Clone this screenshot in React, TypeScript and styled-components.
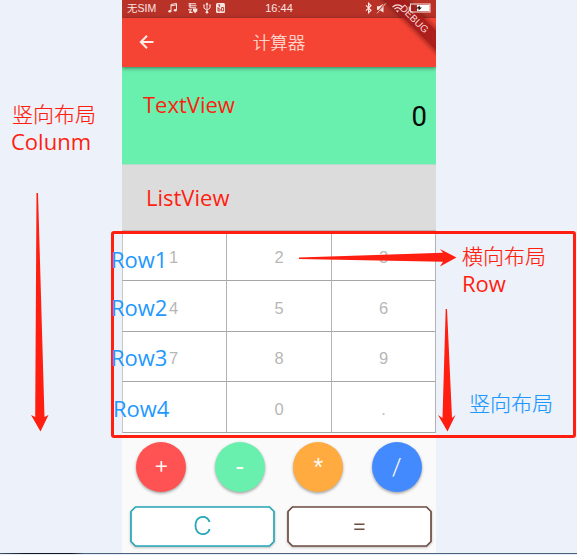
import React from 'react';
import styled, { createGlobalStyle } from 'styled-components';

const GlobalStyle = createGlobalStyle`
  * { box-sizing: border-box; }
  body { margin: 0; background: #edf2fa; overflow: hidden; }
`;

const RED = '#ff1e0f';
const BLUE = '#1e98ff';

const Page = styled.main`
  position: relative;
  width: 577px;
  height: 555px;
  overflow: hidden;
  padding-left: 122px;
  background: #edf2fa;
  font-family: Roboto, 'Noto Sans CJK SC', sans-serif;
`;

const Phone = styled.section`
  position: relative;
  width: 314px;
  height: 553px;
  display: flex;
  flex-direction: column;
  overflow: hidden;
  background: #fafafa;
`;

const StatusBar = styled.div`
  height: 18px;
  flex: none;
  display: grid;
  grid-template-columns: 1fr auto 1fr;
  align-items: center;
  padding: 0 5px 2px;
  background: #b83228;
  color: #f8e4e1;
  font: 11px/16px 'Liberation Sans', 'Noto Sans CJK SC', sans-serif;
`;

const StatusGroup = styled.div<{ $end?: boolean }>`
  position: relative;
  z-index: 3;
  display: flex;
  align-items: center;
  justify-content: ${p => (p.$end ? 'flex-end' : 'flex-start')};
  height: 16px;
  white-space: nowrap;
  svg { display: block; flex: none; }
`;

const Carrier = styled.span`
  width: 40px;
  font-size: 10.5px;
`;

const AppBar = styled.header`
  z-index: 1;
  height: 49px;
  flex: none;
  display: grid;
  grid-template-columns: 49px 1fr 49px;
  align-items: center;
  padding-bottom: 2px;
  background: #f64434;
  box-shadow: 0 1px 4px rgba(0, 0, 0, 0.5);
  color: #fde0dc;
`;

const BackIcon = styled.svg`
  display: block;
  margin-left: 17px;
`;

const Title = styled.h1`
  margin: 0;
  text-align: center;
  font: 300 17.5px/24px 'Noto Sans CJK SC', sans-serif;
  -webkit-text-stroke: 0.2px currentColor;
`;

const Display = styled.div`
  height: 97px;
  flex: none;
  display: flex;
  align-items: center;
  justify-content: flex-end;
  padding: 2px 9px 0 0;
  background: #69f0ae;
  color: #050a07;
  font-size: 27.5px;
  line-height: 32px;
`;

const History = styled.div`
  height: 66px;
  flex: none;
  background: #dcdcdc;
  border-top: 1px solid #b5dcc8;
`;

const Keypad = styled.div`
  height: 203px;
  flex: none;
  display: grid;
  grid-template-rows: 50px 51px 50px 51px;
  background: #fff;
  border-top: 1px solid #b8b8b8;
`;

const KeyRow = styled.div`
  display: grid;
  grid-template-columns: 105px 105px 104px;
`;

const Key = styled.div`
  display: flex;
  align-items: center;
  justify-content: center;
  padding-top: 3px;
  border-right: 1px solid #b3b3b3;
  border-bottom: 1px solid #a6a6a6;
  &:first-child {
    border-left: 1px solid #c8c8c8;
    padding-right: 2px;
  }
  color: #b7b7b7;
  font: 16.5px/20px 'Liberation Sans', sans-serif;
`;

const Operators = styled.div`
  height: 68px;
  flex: none;
  display: grid;
  grid-template-columns: repeat(4, 1fr);
  align-items: center;
  justify-items: center;
`;

const Operator = styled.div<{ $color: string }>`
  width: 50px;
  height: 50px;
  border-radius: 50%;
  display: grid;
  place-items: center;
  background: ${p => p.$color};
  box-shadow: 0 1.5px 3px rgba(0, 0, 0, 0.35);
  color: #fffaf5;
`;

const Symbol = styled.span<{ $size: number; $shift: number; $face?: string; $weight?: number }>`
  display: block;
  padding-top: ${p => Math.max(p.$shift, 0) * 2}px;
  padding-bottom: ${p => Math.max(-p.$shift, 0) * 2}px;
  font: ${p => p.$weight ?? 300} ${p => p.$size}px/30px ${p => p.$face ?? 'Roboto'}, sans-serif;
`;

const Actions = styled.div`
  display: flex;
  gap: 12px;
  padding: 5px 4px 0 8px;
`;

const Action = styled.div<{ $color: string }>`
  position: relative;
  width: 145px;
  height: 41px;
  display: grid;
  place-items: center;
  color: ${p => p.$color};
  filter: drop-shadow(0 1px 1px rgba(0, 0, 0, 0.25));
`;

const Outline = styled.svg`
  position: absolute;
  inset: 0;
`;

const Caption = styled.span<{ $size: number; $lift: number }>`
  position: relative;
  padding-bottom: ${p => p.$lift}px;
  font: 300 ${p => p.$size}px/36px Inter, sans-serif;
`;

const Banner = styled.div`
  position: absolute;
  z-index: 2;
  top: 12px;
  right: -39px;
  width: 120px;
  height: 15px;
  transform: rotate(45deg);
  background: rgba(160, 25, 25, 0.85);
  box-shadow: 0 0 5px rgba(0, 0, 0, 0.6);
`;

const BannerText = styled.div`
  position: absolute;
  z-index: 4;
  top: 12px;
  right: -39px;
  width: 120px;
  transform: rotate(45deg);
  color: #f7d8d8;
  text-align: center;
  font: 10px/15px 'Liberation Sans', sans-serif;
  text-indent: -2px;
`;

const Note = styled.div<{ $x: number; $y: number; $blue?: boolean; $cjk?: boolean }>`
  position: absolute;
  z-index: 3;
  left: ${p => p.$x}px;
  top: ${p => p.$y}px;
  color: ${p => (p.$blue ? BLUE : RED)};
  font: ${p => (p.$cjk ? "300 21px/24px 'Noto Sans CJK SC'" : "22px/24px 'Open Sans'")}, sans-serif;
  -webkit-text-stroke: ${p => (p.$cjk ? '0.2px currentColor' : '0')};
  white-space: nowrap;
`;

const Frame = styled.div`
  position: absolute;
  z-index: 3;
  left: 111px;
  top: 231px;
  width: 465px;
  height: 207px;
  border: 3px solid ${RED};
  border-radius: 3px;
`;

const Arrows = styled.svg`
  position: absolute;
  z-index: 3;
  inset: 0;
`;

const Baseline = styled.div`
  position: absolute;
  left: 0;
  top: 553px;
  width: 577px;
  height: 2px;
  border-top: 1px solid #4c617b;
  background: #e4eef8;
`;

const BaselineShade = styled.div`
  position: absolute;
  left: 0;
  top: 553px;
  width: 84px;
  height: 1px;
  background: linear-gradient(90deg, #44536a, #10151c 30%, #10151c 85%, #4c617b);
`;

const LeftIcons = () => (
  <svg width="60" height="12" viewBox="0 0 60 12" fill="none" stroke="#f8e4e1">
    <path d="M4 9V2.5L9.5 1.5V8M4 3.8L9.5 2.8" />
    <ellipse cx="2.8" cy="9.2" rx="1.5" ry="1.2" fill="#f8e4e1" stroke="none" />
    <ellipse cx="8.2" cy="8.2" rx="1.5" ry="1.2" fill="#f8e4e1" stroke="none" />
    <path d="M21.5 1.7H29M21.5 3.7H29.5M22.5 5.7H29M21 7.8H25M22 10.4H25.5M23 1V6M23.2 7.5V10.5" strokeWidth="1.1" />
    <path d="M26 6.5H30.3V9L28.2 11.2L26 9Z" fill="#f8e4e1" stroke="none" />
    <path d="M40 1.5V10M37 4V6.2L40 8.2L43 6V4" />
    <path d="M38.5 2.8L40 .3L41.5 2.8Z" fill="#f8e4e1" stroke="none" />
    <circle cx="40" cy="10.2" r="1.3" fill="#f8e4e1" stroke="none" />
    <path d="M36 3.2H38M42 3.2H44" />
    <rect x="49" y="1" width="9" height="10" rx="1.5" fill="#f8e4e1" stroke="none" />
    <path d="M51 3.2L52.6 2.6V5M51 5V9H53V7L51 6.5M54.6 5.5H56.6V9H54.6Z" stroke="#b83228" strokeWidth=".9" />
  </svg>
);

const RightIcons = () => (
  <svg width="67" height="12" viewBox="0 0 67 12" fill="none" stroke="#f8e4e1">
    <path d="M2 3.3L7 8.3L4.6 10.7V1.3L7 3.7L2 8.7" strokeWidth="1.2" />
    <path d="M13 4.3H15.3L19.5 1.8V10.5L15.3 8H13Z" fill="#f8e4e1" stroke="none" />
    <path d="M13 11L21.5 1" stroke="#b83228" strokeWidth="1.7" />
    <path d="M13 11.4L21.8 1.4" strokeWidth=".8" />
    <path d="M28.5 5Q33.5 .6 38.5 5M30.5 7Q33.5 4.2 36.5 7" strokeWidth="1.2" />
    <path d="M31.8 8.5H35.2L33.5 10.5Z" fill="#f8e4e1" stroke="none" />
    <rect x="46.5" y="2" width="19.5" height="8" />
    <rect x="53" y="3" width="12.5" height="6" fill="#fff" stroke="none" />
    <path d="M45.3 4.5V8" strokeWidth="1.2" />
    <path d="M55.8 3.4V5.4H58L54.6 8.6V6.5H52.2Z" fill="#210c0a" stroke="none" />
  </svg>
);

const rows = [['1', '2', '3'], ['4', '5', '6'], ['7', '8', '9'], ['', '0', '.']];

const operators = [
  { label: '+', color: '#ff5252', size: 24, shift: -2, face: 'Inter' },
  { label: '-', color: '#69f0ae', size: 27, shift: 0, weight: 400 },
  { label: '*', color: '#ffab40', size: 25, shift: 0, face: "'Liberation Sans'", weight: 400 },
  { label: '/', color: '#448aff', size: 24, shift: 0 },
];

const actions = [
  { label: 'C', color: '#24a7b6', size: 26, lift: 1 },
  { label: '=', color: '#6d4c41', size: 25, lift: 4 },
];

export default function App() {
  return (
    <>
      <GlobalStyle />
      <Page>
        <Phone>
          <StatusBar>
            <StatusGroup>
              <Carrier>无SIM</Carrier>
              <LeftIcons />
            </StatusGroup>
            <span>16:44</span>
            <StatusGroup $end><RightIcons /></StatusGroup>
          </StatusBar>
          <AppBar>
            <BackIcon width="16" height="16" viewBox="0 0 16 16" fill="none" stroke="#ffebe8" strokeWidth="2">
              <path d="M14.5 8H2M8 1.8L1.8 8L8 14.2" />
            </BackIcon>
            <Title>计算器</Title>
          </AppBar>
          <Banner />
          <BannerText>DEBUG</BannerText>
          <Display>0</Display>
          <History />
          <Keypad>
            {rows.map((row, i) => (
              <KeyRow key={i}>
                {row.map((label, j) => <Key key={j}>{label}</Key>)}
              </KeyRow>
            ))}
          </Keypad>
          <Operators>
            {operators.map(o => (
              <Operator key={o.label} $color={o.color}>
                <Symbol $size={o.size} $shift={o.shift} $face={o.face} $weight={o.weight}>{o.label}</Symbol>
              </Operator>
            ))}
          </Operators>
          <Actions>
            {actions.map(a => (
              <Action key={a.label} $color={a.color}>
                <Outline width="145" height="41" viewBox="0 0 145 41">
                  <path d="M5.5 1H139.5L144 5.5V35.5L139.5 40H5.5L1 35.5V5.5Z" fill="#fff" stroke={a.color} strokeWidth="1.7" />
                </Outline>
                <Caption $size={a.size} $lift={a.lift}>{a.label}</Caption>
              </Action>
            ))}
          </Actions>
        </Phone>

        <Frame />
        <Arrows width="577" height="555" viewBox="0 0 577 555" fill={RED}>
          <path d="M36.5 193H38L44.5 417L48.5 415L40.5 431.5L31 415L35.2 417Z" />
          <path d="M445.7 309H447L452 418L455.5 415L447.5 431.5L438 415L442.5 418Z" />
          <path d="M299 257.5L443 252.8L440 249L456.5 257.5L440 266.5L443 261.8L299 259Z" />
        </Arrows>
        <Note $x={12} $y={101} $cjk>竖向布局</Note>
        <Note $x={11} $y={129}>Colunm</Note>
        <Note $x={143} $y={92}>TextView</Note>
        <Note $x={146} $y={185}>ListView</Note>
        <Note $x={111} $y={247} $blue>Row1</Note>
        <Note $x={111} $y={295} $blue>Row2</Note>
        <Note $x={111} $y={345} $blue>Row3</Note>
        <Note $x={113} $y={396} $blue>Row4</Note>
        <Note $x={462} $y={243} $cjk>横向布局</Note>
        <Note $x={462} $y={271}>Row</Note>
        <Note $x={469} $y={390} $cjk $blue>竖向布局</Note>
        <Baseline />
        <BaselineShade />
      </Page>
    </>
  );
}
